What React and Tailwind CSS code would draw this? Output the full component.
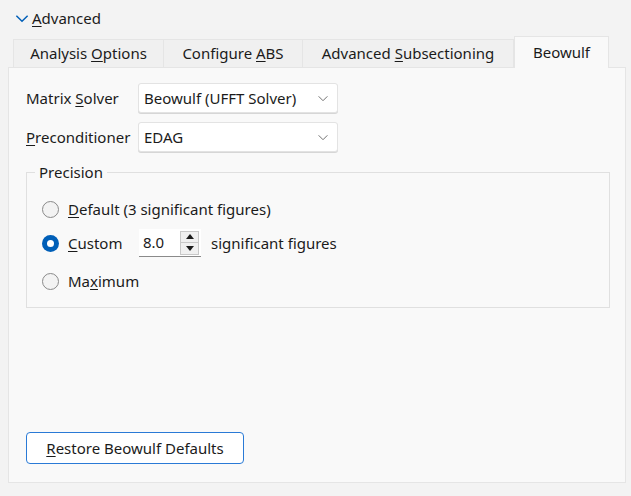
import React from 'react';

const U = ({ children }) => <span className="underline underline-offset-2 decoration-1">{children}</span>;

const Chevron = ({ className, width = '1.1' }) => (
  <svg viewBox="0 0 12 8" className={className} fill="none" stroke="currentColor" strokeWidth={width}>
    <path d="M1 1.5 L6 6.5 L11 1.5" />
  </svg>
);

const Select = ({ value }) => (
  <div className="w-[200px] h-[30px] bg-white border border-[#e3e3e3] rounded-[3px] flex items-center pl-[5px] pr-[8px] shadow-[0_1px_0_#d6d6d6]">
    <span className="flex-1">{value}</span>
    <Chevron className="w-[12px] h-[7px] text-[#6b6b6b]" />
  </div>
);

const Radio = ({ checked }) =>
  checked ? (
    <div className="w-[17px] h-[17px] rounded-full bg-[#005fb8] flex items-center justify-center">
      <div className="w-[7px] h-[7px] rounded-full bg-white" />
    </div>
  ) : (
    <div className="w-[17px] h-[17px] rounded-full border border-[#8a8a8a] bg-[#f3f3f3]" />
  );

const Tab = ({ active, width, children }) => (
  <div
    className={
      active
        ? `${width} h-[32px] bg-[#f9f9f9] border border-b-0 border-[#e5e5e5] flex items-center justify-center -mb-px relative z-10`
        : `${width} h-[28px] bg-[#f0f0f0] border border-b-0 border-[#e5e5e5] -ml-px first:ml-0 flex items-center justify-center`
    }
  >
    <span>{children}</span>
  </div>
);

export default function App() {
  return (
    <div
      className="w-[631px] h-[496px] bg-[#f3f3f3] text-[#1b1b1b] text-[15px] leading-none"
      style={{ fontFamily: '"Noto Sans", "Open Sans", sans-serif' }}
    >
      <div className="flex items-center pl-[14px] pt-[9px] h-[28px]">
        <Chevron className="w-[16px] h-[9px] text-[#005fb8] mr-[2px]" width="1.3" />
        <span>
          <U>A</U>dvanced
        </span>
      </div>

      <div className="flex items-end pl-[13px] mt-[8px] h-[31px]">
        <Tab width="w-[151px]">
          Analysis <U>O</U>ptions
        </Tab>
        <Tab width="w-[140px]">
          Configure <U>A</U>BS
        </Tab>
        <Tab width="w-[212px]">
          Advanced <U>S</U>ubsectioning
        </Tab>
        <Tab active width="w-[95px]">
          Beowulf
        </Tab>
      </div>

      <div className="mx-[8px] mt-0 w-[618px] h-[416px] bg-[#f9f9f9] border border-[#e5e5e5] flex flex-col pl-[17px] pr-[15px]">
        <div className="flex items-center mt-[15px]">
          <span className="w-[112px]">
            Matrix <U>S</U>olver
          </span>
          <Select value="Beowulf (UFFT Solver)" />
        </div>
        <div className="flex items-center mt-[9px]">
          <span className="w-[112px]">
            <U>P</U>reconditioner
          </span>
          <Select value="EDAG" />
        </div>

        <div className="relative mt-[20px] h-[136px] border border-[#e0e0e0] flex flex-col pl-[15px]">
          <span className="absolute -top-[8px] left-[8px] px-[4px] bg-[#f9f9f9]">Precision</span>
          <div className="flex items-center gap-[9px] mt-[28px]">
            <Radio />
            <span>
              <U>D</U>efault (3 significant figures)
            </span>
          </div>
          <div className="flex items-center mt-[11px]">
            <Radio checked />
            <span className="ml-[9px] w-[71px]">
              <U>C</U>ustom
            </span>
            <div className="flex items-center w-[62px] h-[28px] bg-white border-b border-[#8a8a8a] pl-[4px]">
              <span className="flex-1">8.0</span>
              <div className="w-[19px] h-[24px] mr-[2px] border border-[#c8c8c8] bg-[#f0f0f0] flex flex-col">
                <div className="flex-1 flex items-center justify-center border-b border-[#c8c8c8]">
                  <svg viewBox="0 0 8 5" className="w-[8px] h-[5px]"><path d="M0 5 L4 0 L8 5Z" fill="#1b1b1b" /></svg>
                </div>
                <div className="flex-1 flex items-center justify-center">
                  <svg viewBox="0 0 8 5" className="w-[8px] h-[5px]"><path d="M0 0 L4 5 L8 0Z" fill="#1b1b1b" /></svg>
                </div>
              </div>
            </div>
            <span className="ml-[10px]">significant figures</span>
          </div>
          <div className="flex items-center gap-[9px] mt-[16px]">
            <Radio />
            <span>
              Ma<U>x</U>imum
            </span>
          </div>
        </div>

        <div className="flex-1" />
        <button className="self-start mb-[18px] w-[218px] h-[32px] bg-white border-[1.5px] border-[#2a7ad6] rounded-[4px] flex items-center justify-center">
          <span>
            <U>R</U>estore Beowulf Defaults
          </span>
        </button>
      </div>
    </div>
  );
}
